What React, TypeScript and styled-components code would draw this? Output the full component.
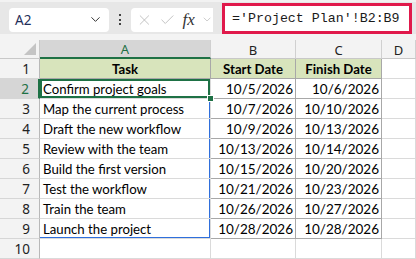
import React from 'react';
import styled, { createGlobalStyle, css } from 'styled-components';
import { ChevronDown, X, Check } from 'lucide-react';

interface Row {
  task: string;
  start: string;
  finish: string;
}

const rows: Row[] = [
  { task: 'Confirm project goals', start: '10/5/2026', finish: '10/6/2026' },
  { task: 'Map the current process', start: '10/7/2026', finish: '10/10/2026' },
  { task: 'Draft the new workflow', start: '10/9/2026', finish: '10/13/2026' },
  { task: 'Review with the team', start: '10/13/2026', finish: '10/14/2026' },
  { task: 'Build the first version', start: '10/15/2026', finish: '10/20/2026' },
  { task: 'Test the workflow', start: '10/21/2026', finish: '10/23/2026' },
  { task: 'Train the team', start: '10/26/2026', finish: '10/27/2026' },
  { task: 'Launch the project', start: '10/28/2026', finish: '10/28/2026' },
];

const GREEN = '#1e7145';
const BLUE = '#2f6fdc';

const GlobalStyle = createGlobalStyle`
  html, body {
    margin: 0;
    padding: 0;
    background: #ffffff;
    overflow: hidden;
  }
  body {
    font-family: Lato, 'Liberation Sans', sans-serif;
  }
`;

const Page = styled.div`
  width: 416px;
  height: 259px;
  display: flex;
  flex-direction: column;
  overflow: hidden;
`;

const Toolbar = styled.div`
  height: 40px;
  background: #e7e7e7;
  border-top: 2px solid #f2f2f2;
  box-sizing: border-box;
  display: flex;
  align-items: center;
  padding: 0 4px 0 9px;
`;

const NameBox = styled.div`
  width: 100px;
  height: 24px;
  box-sizing: border-box;
  background: #fff;
  border-radius: 4px;
  display: flex;
  align-items: center;
  justify-content: space-between;
  padding: 0 6px 0 6px;
  margin-top: 3px;
  font-family: 'Noto Sans', sans-serif;
  font-size: 13.5px;
  color: #1f2f5a;
`;

const Dots = styled.div`
  width: 22px;
  display: flex;
  flex-direction: column;
  align-items: center;
  gap: 2.5px;
  margin-top: 3px;
  span {
    width: 2px;
    height: 2px;
    background: #444;
  }
`;

const FxBox = styled.div`
  width: 82px;
  height: 24px;
  box-sizing: border-box;
  background: #fff;
  border-radius: 4px 0 0 4px;
  display: flex;
  align-items: center;
  padding-left: 5px;
  gap: 6px;
  margin-top: 3px;
  color: #b8b8b8;
`;

const Fx = styled.span`
  font-family: 'Liberation Serif', serif;
  font-style: italic;
  font-size: 17px;
  color: #333;
  margin-left: 1px;
`;

const FormulaInput = styled.div`
  flex: 1;
  margin-left: 9px;
  height: 31px;
  margin-top: 1px;
  box-sizing: border-box;
  border: 3px solid #e0194b;
  background: #fff;
  display: flex;
  align-items: center;
  padding-left: 7px;
  font-family: 'Liberation Mono', monospace;
  font-size: 13.3px;
  color: #1a1a1a;
  white-space: nowrap;
`;

const Band = styled.div`
  height: 16px;
  background: #f3f3f3;
`;

const Sheet = styled.div`
  display: grid;
  grid-template-columns: 40px 171px 85px 86px 1fr;
  grid-template-rows: 19px repeat(10, 20px);
`;

const Corner = styled.div`
  background: #f3f3f3;
  border-right: 1px solid #c8c8c8;
  border-bottom: 1px solid #c8c8c8;
  position: relative;
  &::after {
    content: '';
    position: absolute;
    right: 3px;
    bottom: 3px;
    width: 0;
    height: 0;
    border-left: 12px solid transparent;
    border-bottom: 12px solid #c4c4c4;
  }
`;

const ColHead = styled.div<{ $active?: boolean }>`
  background: ${(p) => (p.$active ? '#d6d6d6' : '#f3f3f3')};
  border-right: 1px solid #d0d0d0;
  border-bottom: ${(p) => (p.$active ? `2px solid ${GREEN}` : '1px solid #c8c8c8')};
  color: ${(p) => (p.$active ? GREEN : '#222')};
  font-family: 'Noto Sans', sans-serif;
  font-size: 13px;
  display: flex;
  align-items: center;
  justify-content: center;
  padding-top: 1px;
`;

const RowHead = styled.div<{ $active?: boolean }>`
  background: ${(p) => (p.$active ? '#d6d6d6' : '#f3f3f3')};
  border-right: ${(p) => (p.$active ? `2px solid ${GREEN}` : '1px solid #b8b8b8')};
  border-bottom: 1px solid #d6d6d6;
  color: ${(p) => (p.$active ? GREEN : '#222')};
  font-family: 'Noto Sans', sans-serif;
  font-size: 13.5px;
  display: flex;
  align-items: center;
  justify-content: flex-end;
  padding-right: 9px;
`;

const Cell = styled.div<{
  $kind?: 'head' | 'text' | 'date' | 'empty';
  $selected?: boolean;
  $rangeRight?: boolean;
  $rangeBottom?: boolean;
  $table?: boolean;
}>`
  position: relative;
  font-size: 13.2px;
  color: #000;
  display: flex;
  align-items: center;
  white-space: nowrap;
  padding: 1px 3px 0;
  border-right: 1px solid ${(p) => (p.$table ? '#a8a8a8' : '#dadada')};
  border-bottom: 1px solid ${(p) => (p.$table ? '#a8a8a8' : '#dadada')};
  ${(p) =>
    p.$kind === 'head' &&
    css`
      background: #d8e4bc;
      font-weight: bold;
      justify-content: center;
      border-right-color: #a8a8a8;
      border-bottom-color: #a8a8a8;
    `}
  ${(p) =>
    p.$kind === 'date' &&
    css`
      justify-content: flex-end;
      font-size: 13.5px;
      padding-right: 2px;
    `}
  ${(p) => {
    const shadows: string[] = [];
    if (p.$selected) shadows.push(`inset 0 0 0 2px ${GREEN}`);
    if (p.$rangeRight) shadows.push(`inset -1px 0 0 0 ${BLUE}`);
    if (p.$rangeBottom) shadows.push(`inset 0 -1px 0 0 ${BLUE}`);
    return shadows.length ? css`box-shadow: ${shadows.join(', ')};` : '';
  }}
`;

const FillHandle = styled.span`
  position: absolute;
  right: -4px;
  bottom: -4px;
  width: 5px;
  height: 5px;
  background: ${GREEN};
  border: 1px solid #fff;
  z-index: 2;
`;

const App: React.FC = () => {
  return (
    <Page>
      <GlobalStyle />
      <Toolbar>
        <NameBox>
          <span>A2</span>
          <ChevronDown size={15} color="#333" strokeWidth={1.6} />
        </NameBox>
        <Dots>
          <span />
          <span />
          <span />
        </Dots>
        <FxBox>
          <X size={18} strokeWidth={1.2} />
          <Check size={18} strokeWidth={1.2} />
          <Fx>fx</Fx>
          <ChevronDown size={13} strokeWidth={1.4} />
        </FxBox>
        <FormulaInput>='Project Plan'!B2:B9</FormulaInput>
      </Toolbar>
      <Band />
      <Sheet>
        <Corner />
        <ColHead $active>A</ColHead>
        <ColHead>B</ColHead>
        <ColHead>C</ColHead>
        <ColHead>D</ColHead>

        <RowHead>1</RowHead>
        <Cell $kind="head">Task</Cell>
        <Cell $kind="head">Start Date</Cell>
        <Cell $kind="head">Finish Date</Cell>
        <Cell $kind="empty" />

        {rows.map((r, i) => {
          const n = i + 2;
          const last = i === rows.length - 1;
          return (
            <React.Fragment key={r.task}>
              <RowHead $active={n === 2}>{n}</RowHead>
              <Cell
                $kind="text"
                $selected={n === 2}
                $rangeRight={n !== 2}
                $rangeBottom={last}
              >
                {r.task}
                {n === 2 && <FillHandle />}
              </Cell>
              <Cell $kind="date" $table>
                {r.start}
              </Cell>
              <Cell $kind="date" $table>
                {r.finish}
              </Cell>
              <Cell $kind="empty" />
            </React.Fragment>
          );
        })}

        <RowHead>10</RowHead>
        <Cell $kind="empty" />
        <Cell $kind="empty" />
        <Cell $kind="empty" />
        <Cell $kind="empty" />
      </Sheet>
    </Page>
  );
};

export default App;
